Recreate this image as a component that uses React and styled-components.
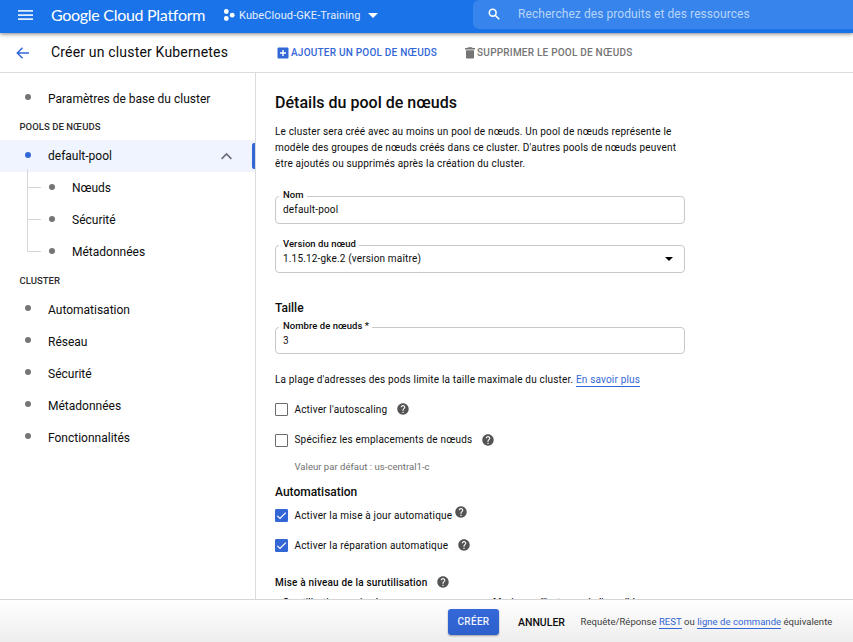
import React from "react";
import styled, { createGlobalStyle, css } from "styled-components";

const GlobalStyle = createGlobalStyle`
  * { box-sizing: border-box; }
  body { margin: 0; background: #fff; overflow: hidden; }
`;

const Page = styled.div`
  display: flex;
  flex-direction: column;
  width: 853px;
  height: 642px;
  overflow: hidden;
  background: #fff;
  color: #0c0c0d;
  font-family: Roboto, sans-serif;
  font-size: 10px;
  letter-spacing: 0.18px;
  svg { display: block; flex: none; }
`;

const TopBar = styled.header`
  position: relative;
  z-index: 2;
  flex: none;
  display: flex;
  align-items: flex-start;
  height: 33px;
  background: #1a73e8;
  color: #fff;
  box-shadow: 0 1px 4px rgba(0, 0, 0, 0.5);
`;

const MenuButton = styled.div`
  width: 51px;
  padding: 9px 0 0 18px;
`;

const Brand = styled.div`
  width: 172px;
  font: 400 16px/29px Lato, sans-serif;
  letter-spacing: -0.29px;
  white-space: nowrap;
`;

const ProjectPicker = styled.div`
  display: flex;
  align-items: center;
  width: 250px;
  height: 29px;
  font-size: 11px;
  letter-spacing: 0.1px;
  color: #e6f0fd;
`;

const ProjectName = styled.span`
  margin: 2px 7px 0 4px;
  white-space: nowrap;
`;

const SearchBox = styled.div`
  flex: 1;
  display: flex;
  align-items: center;
  gap: 18px;
  height: 29px;
  padding: 0 0 1px 15px;
  border-radius: 6px 0 0 6px;
  background: #3684ec;
  color: #b9d5f9;
  font-size: 12px;
  letter-spacing: 0.07px;
  white-space: nowrap;
`;

const ActionBar = styled.div`
  flex: none;
  display: flex;
  align-items: center;
  height: 40px;
  border-bottom: 1px solid #dadbdd;
`;

const BackButton = styled.div`
  width: 51px;
  padding-left: 16px;
`;

const PageTitle = styled.h1`
  width: 226px;
  margin: 0;
  padding-bottom: 2px;
  font-size: 14px;
  font-weight: 400;
  letter-spacing: 0.175px;
  white-space: nowrap;
`;

const Action = styled.div`
  display: flex;
  align-items: center;
  gap: ${(p) => p.$gap}px;
  margin-right: 28px;
  font-weight: 500;
  letter-spacing: 0.22px;
  white-space: nowrap;
  color: ${(p) => (p.$primary ? "#3367d6" : "#757575")};
`;

const Body = styled.div`
  flex: 1;
  min-height: 0;
  display: flex;
`;

const Sidebar = styled.nav`
  flex: none;
  width: 256px;
  padding-top: 10px;
  border-right: 1px solid #dadbdd;
`;

const NavHeading = styled.div`
  height: ${(p) => p.$height}px;
  padding-left: 19.5px;
  font-size: 9.5px;
  font-weight: 500;
  letter-spacing: 0.04px;
  line-height: ${(p) => p.$height - 1}px;
  color: #2b2b2b;
`;

const NavItem = styled.div`
  display: flex;
  align-items: center;
  height: 32px;
  padding-left: 25px;
  font-size: 12px;
  letter-spacing: 0;
  background: ${(p) => (p.$active ? "#eff4fe" : "transparent")};
`;

const Bullet = styled.span`
  width: 6px;
  height: 6px;
  margin: ${(p) => (p.$active ? "-2px" : "-4px")} 17px 0 0;
  border-radius: 50%;
  background: ${(p) => (p.$active ? "#3367d6" : "#757575")};
  ${(p) => p.$nested && css`margin-top: -2px;`}
`;

const NavLabel = styled.span`
  flex: 1;
  white-space: nowrap;
`;

const ActiveMark = styled.span`
  width: 3px;
  height: 26px;
  margin-left: 20px;
  border-radius: 2px 0 0 2px;
  background: #3367d6;
`;

const NavTree = styled.div`
  display: grid;
  grid-template-columns: 24px 1fr;
`;

const TreeLines = styled.svg`
  margin-top: -3px;
`;

const Content = styled.main`
  flex: 1;
  min-width: 0;
  overflow: hidden;
  padding: 20px 0 0 19px;
`;

const Heading = styled.h2`
  margin: 0;
  height: 31px;
  font-size: 16px;
  font-weight: 500;
  line-height: 20px;
  letter-spacing: 0.02px;
`;

const Intro = styled.p`
  margin: 0 0 24px;
  width: 410px;
  line-height: 16px;
  letter-spacing: 0.18px;
`;

const Field = styled.div`
  position: relative;
  display: flex;
  align-items: center;
  justify-content: space-between;
  width: 410px;
  height: ${(p) => p.$height || 28}px;
  margin-bottom: ${(p) => p.$after}px;
  padding: 0 11px 1px 7px;
  border: 1px solid #c7c8ca;
  border-radius: 4px;
  letter-spacing: 0.17px;
`;

const FieldLabel = styled.span`
  position: absolute;
  left: 3px;
  top: -8px;
  padding: 0 3px 0 4px;
  background: #fff;
  font-size: 9.5px;
  font-weight: 500;
  line-height: 12px;
  letter-spacing: 0.045px;
`;

const Subheading = styled.h3`
  margin: 0;
  height: ${(p) => p.$height}px;
  font-size: 12px;
  font-weight: 500;
  line-height: 16px;
  letter-spacing: -0.01px;
`;

const Note = styled.p`
  margin: 0 0 16px;
  line-height: 14px;
  letter-spacing: 0.175px;
`;

const Link = styled.a`
  display: inline-block;
  height: 14px;
  color: #3367d6;
  border-bottom: 1px solid #3367d6;
`;

const Option = styled.div`
  display: flex;
  align-items: center;
  height: 13px;
  margin-bottom: ${(p) => p.$after}px;
  white-space: nowrap;
`;

const CheckBox = styled.span`
  flex: none;
  width: 13px;
  height: 13px;
  margin-right: 6.5px;
  border: 1px solid ${(p) => (p.$checked ? "#3367d6" : "#6b6b6b")};
  border-radius: 1px;
  background: ${(p) => (p.$checked ? "#3367d6" : "#fff")};
`;

const OptionLabel = styled.span`
  margin-right: ${(p) => p.$gap}px;
  margin-bottom: ${(p) => (p.$lifted ? 2 : 0)}px;
`;

const HelpSlot = styled.span`
  margin-bottom: ${(p) => p.$offset}px;
`;

const Hint = styled.div`
  height: 23px;
  padding-left: 19.5px;
  font-size: 9.5px;
  letter-spacing: 0.03px;
  line-height: 12px;
  color: #6f6f6f;
`;

const MinorHeading = styled.div`
  display: flex;
  align-items: center;
  height: 13px;
  margin-bottom: 7px;
  font-weight: 500;
`;

const FieldPair = styled.div`
  display: grid;
  grid-template-columns: 210px 1fr;
  padding-left: 8px;
  font-size: 9.5px;
  font-weight: 500;
  line-height: 12px;
  letter-spacing: 0;
  white-space: nowrap;
`;

const Footer = styled.footer`
  flex: none;
  display: flex;
  align-items: center;
  height: 43px;
  padding-left: 448px;
  border-top: 1px solid #d6d6d6;
  background: linear-gradient(#fff, #eeeeee);
`;

const CreateButton = styled.button`
  width: 51px;
  height: 26px;
  margin: 2px 19px 0 0;
  padding: 0 0 2px;
  border: 0;
  border-radius: 3px;
  background: linear-gradient(#3468d8, #2e60cd);
  box-shadow: 0 1px 2px rgba(0, 0, 0, 0.35);
  color: #eef3fd;
  font: 500 10px Roboto, sans-serif;
  letter-spacing: 0.3px;
`;

const CancelButton = styled.span`
  width: 62.5px;
  padding-top: 3px;
  font-size: 10.5px;
  font-weight: 500;
  letter-spacing: 0;
`;

const Equivalent = styled.span`
  padding-top: 2px;
  font-size: 9.5px;
  line-height: 14px;
  letter-spacing: 0.04px;
  color: #3c3c3c;
  white-space: nowrap;
`;

const HelpIcon = () => (
  <svg width="12" height="12" viewBox="1.5 1.5 21 21" fill="#545454">
    <path d="M12 2C6.48 2 2 6.48 2 12s4.48 10 10 10 10-4.48 10-10S17.52 2 12 2zm1 17h-2v-2h2v2zm2.07-7.75-.9.92C13.45 12.9 13 13.5 13 15h-2v-.5c0-1.1.45-2.1 1.17-2.83l1.24-1.26c.37-.36.59-.86.59-1.41 0-1.1-.9-2-2-2s-2 .9-2 2H8c0-2.21 1.79-4 4-4s4 1.79 4 4c0 .88-.36 1.68-.93 2.25z" />
  </svg>
);

const Help = ({ offset = 1 }) => (
  <HelpSlot $offset={offset}><HelpIcon /></HelpSlot>
);

const CheckRow = ({ label, checked, gap = 10, after, helpOffset, lifted }) => (
  <Option $after={after}>
    <CheckBox $checked={checked}>
      {checked && (
        <svg width="11" height="11" viewBox="0 0 11 11" fill="none" stroke="#fff" strokeWidth="1.2">
          <path d="M1.3 5.9 4 8.5 9.8 2.6" />
        </svg>
      )}
    </CheckBox>
    <OptionLabel $gap={gap} $lifted={lifted}>{label}</OptionLabel>
    <Help offset={helpOffset} />
  </Option>
);

const clusterItems = ["Automatisation", "Réseau", "Sécurité", "Métadonnées", "Fonctionnalités"];
const poolItems = ["Nœuds", "Sécurité", "Métadonnées"];

export default function App() {
  return (
    <Page>
      <GlobalStyle />
      <TopBar>
        <MenuButton>
          <svg width="15" height="12" fill="#e3eefc">
            <path d="M0 1h15v1.7H0zM0 5.2h15v1.7H0zM0 9.3h15V11H0z" />
          </svg>
        </MenuButton>
        <Brand>Google Cloud Platform</Brand>
        <ProjectPicker>
          <svg width="12" height="12" viewBox="0 0 12 12" fill="#fff">
            <circle cx="3.3" cy="2.5" r="2.4" />
            <circle cx="9.2" cy="6.2" r="2.4" />
            <circle cx="3.3" cy="9.5" r="2.4" />
          </svg>
          <ProjectName>KubeCloud-GKE-Training</ProjectName>
          <svg width="10" height="7" fill="#fff"><path d="M0 2h10L5 7z" /></svg>
        </ProjectPicker>
        <SearchBox>
          <svg width="12" height="12" viewBox="0 0 12 12" fill="none" stroke="#fff" strokeWidth="1.6">
            <circle cx="4.7" cy="4.7" r="3.4" />
            <path d="m7.2 7.2 4 4" />
          </svg>
          <span>Recherchez des produits et des ressources</span>
        </SearchBox>
      </TopBar>

      <ActionBar>
        <BackButton>
          <svg width="13" height="12" viewBox="0 0 13 12" fill="none" stroke="#3367d6" strokeWidth="1.5">
            <path d="M13 6H1.5M6.5.8 1.3 6l5.2 5.2" />
          </svg>
        </BackButton>
        <PageTitle>Créer un cluster Kubernetes</PageTitle>
        <Action $primary $gap={2}>
          <svg width="12" height="12">
            <rect x=".5" y=".5" width="11" height="11" rx="1" fill="#3367d6" />
            <path d="M6 3v6M3 6h6" stroke="#fff" strokeWidth="1.4" />
          </svg>
          AJOUTER UN POOL DE NŒUDS
        </Action>
        <Action $gap={2}>
          <svg width="10" height="12" fill="#757575">
            <path d="M3 .3h4l.6.7H10v1.5H0V1h2.4zM1 3.2h8v7.3c0 .7-.4 1.1-1.1 1.1H2.1C1.4 11.6 1 11.2 1 10.5z" />
          </svg>
          SUPPRIMER LE POOL DE NŒUDS
        </Action>
      </ActionBar>

      <Body>
        <Sidebar>
          <NavItem><Bullet /><NavLabel>Paramètres de base du cluster</NavLabel></NavItem>
          <NavHeading $height={25}>POOLS DE NŒUDS</NavHeading>
          <NavItem $active>
            <Bullet $active />
            <NavLabel>default-pool</NavLabel>
            <svg width="11" height="8" viewBox="0 0 11 8" fill="none" stroke="#6d6f75" strokeWidth="1.7">
              <path d="M.6 6.8 5.5 1.9l4.9 4.9" />
            </svg>
            <ActiveMark />
          </NavItem>
          <NavTree>
            <TreeLines width="42" height="99" fill="none" stroke="#d5d6d8">
              <path d="M27.5 0v82.5H41M27.5 18.5H41M27.5 50.5H41" />
            </TreeLines>
            <div>
              {poolItems.map((item) => (
                <NavItem key={item}><Bullet $nested /><NavLabel>{item}</NavLabel></NavItem>
              ))}
            </div>
          </NavTree>
          <NavHeading $height={26}>CLUSTER</NavHeading>
          {clusterItems.map((item) => (
            <NavItem key={item}><Bullet /><NavLabel>{item}</NavLabel></NavItem>
          ))}
        </Sidebar>

        <Content>
          <Heading>Détails du pool de nœuds</Heading>
          <Intro>
            Le cluster sera créé avec au moins un pool de nœuds. Un pool de nœuds représente le
            modèle des groupes de nœuds créés dans ce cluster. D'autres pools de nœuds peuvent
            être ajoutés ou supprimés après la création du cluster.
          </Intro>
          <Field $after={21}>
            <FieldLabel>Nom</FieldLabel>
            default-pool
          </Field>
          <Field $after={27}>
            <FieldLabel>Version du nœud</FieldLabel>
            1.15.12-gke.2 (version maître)
            <svg width="8" height="4"><path d="M0 0h8L4 4z" /></svg>
          </Field>
          <Subheading $height={27}>Taille</Subheading>
          <Field $height={27} $after={19}>
            <FieldLabel>Nombre de nœuds *</FieldLabel>
            3
          </Field>
          <Note>
            La plage d'adresses des pods limite la taille maximale du cluster. <Link>En savoir plus</Link>
          </Note>
          <CheckRow label="Activer l'autoscaling" after={18} />
          <CheckRow label="Spécifiez les emplacements de nœuds" after={14} lifted helpOffset={2} />
          <Hint>Valeur par défaut : us-central1-c</Hint>
          <Subheading $height={25}>Automatisation</Subheading>
          <CheckRow checked label="Activer la mise à jour automatique" gap={3} after={17} helpOffset={7} />
          <CheckRow checked label="Activer la réparation automatique" after={24} />
          <MinorHeading>
            <OptionLabel $gap={10}>Mise à niveau de la surutilisation</OptionLabel>
            <Help />
          </MinorHeading>
          <FieldPair>
            <span>Surutilisation maximale</span>
            <span>Maximum d'instances indisponibles</span>
          </FieldPair>
        </Content>
      </Body>

      <Footer>
        <CreateButton>CRÉER</CreateButton>
        <CancelButton>ANNULER</CancelButton>
        <Equivalent>
          Requête/Réponse <Link>REST</Link> ou <Link>ligne de commande</Link> équivalente
        </Equivalent>
      </Footer>
    </Page>
  );
}
